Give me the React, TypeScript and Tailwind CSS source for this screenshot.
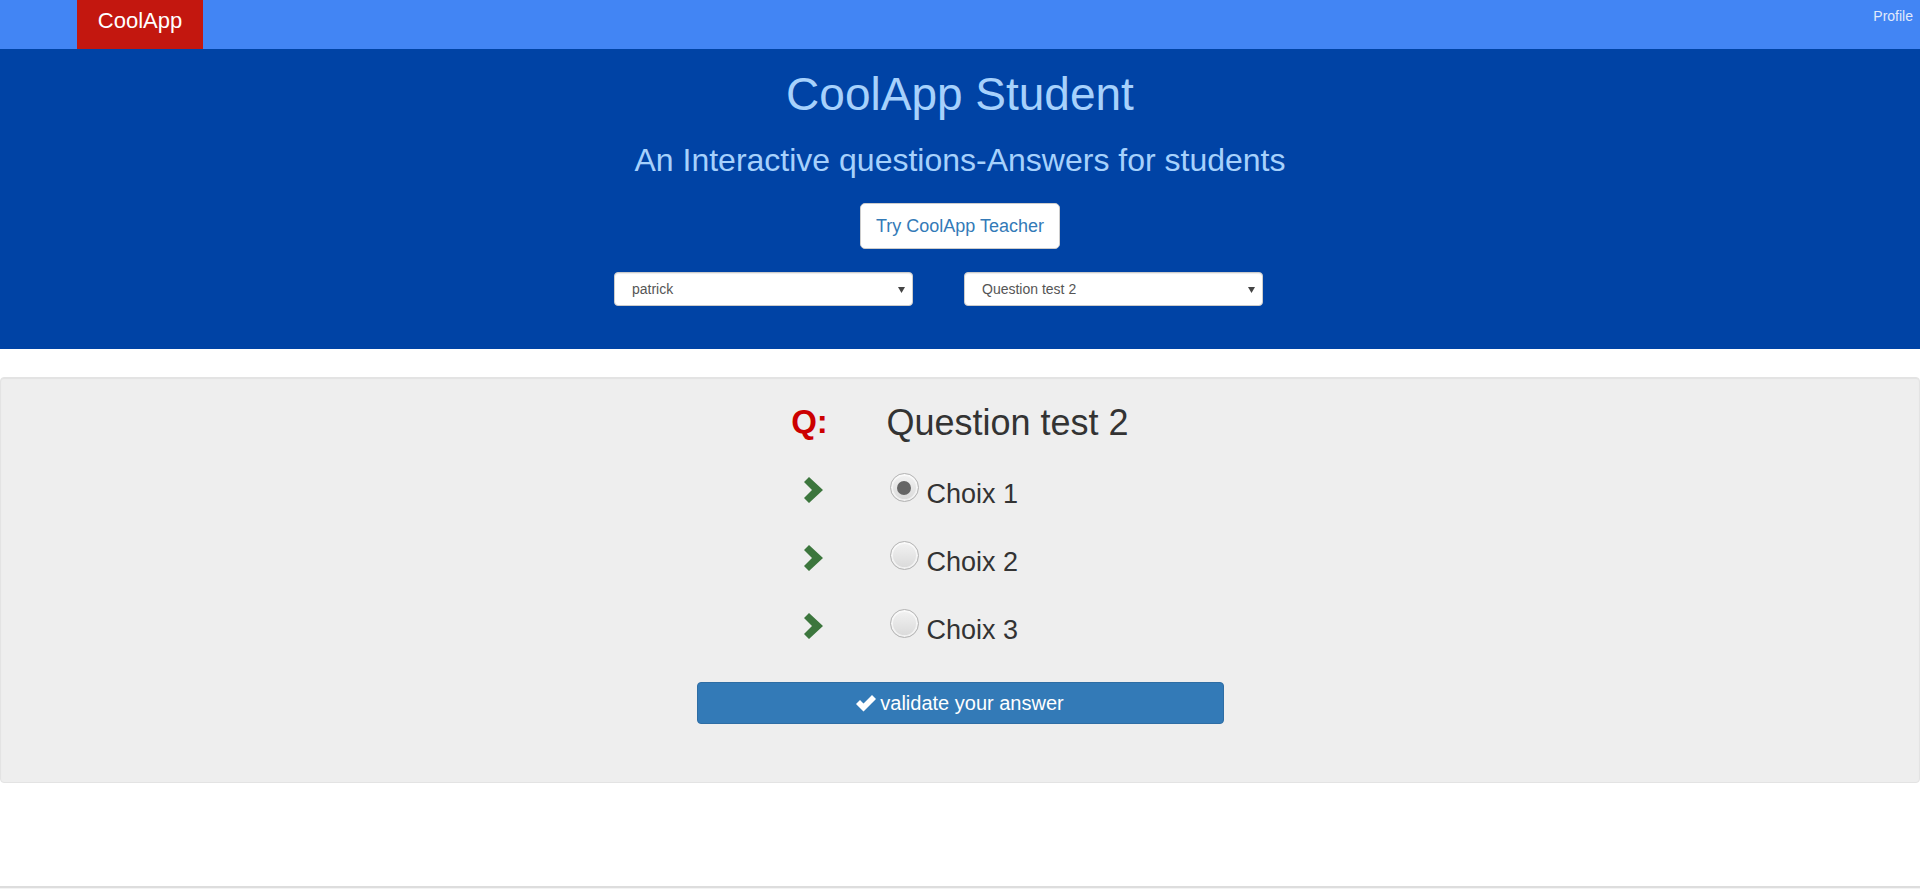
const font = { fontFamily: '"Liberation Sans", Arial, sans-serif' };

function Chevron() {
  return (
    <svg width="19" height="26" viewBox="0 0 19 26" className="block">
      <polygon points="0,5 5,0 19,13 5,26 0,21 8,13" fill="#3c763d" />
    </svg>
  );
}

function Check() {
  return (
    <svg width="20" height="17" viewBox="0 0 20 17" className="block">
      <polygon points="0,9 4,5 7.5,8.5 16,0 20,4 7.5,16.5" fill="#ffffff" />
    </svg>
  );
}

function Select({ value }: { value: string }) {
  return (
    <div className="relative flex h-[34px] w-[299px] items-center rounded-[4px] border border-[#ccc] bg-white pl-[17px] text-[14px] text-[#555] shadow-[inset_0_1px_1px_rgba(0,0,0,0.075)]">
      <span>{value}</span>
      <svg width="7" height="6" viewBox="0 0 7 6" className="absolute right-[7px] top-[14px]">
        <polygon points="0,0 7,0 3.5,6" fill="#444" />
      </svg>
    </div>
  );
}

function Radio({ checked }: { checked?: boolean }) {
  return (
    <span className="flex h-[29px] w-[29px] shrink-0 items-center justify-center rounded-full border border-[#b3b3b3] bg-gradient-to-b from-[#f3f3f3] to-[#d9d9d9] shadow-[inset_0_0_0_2px_rgba(255,255,255,0.6)]">
      {checked && <span className="h-[14px] w-[14px] rounded-full bg-[#666]" />}
    </span>
  );
}

const choices = ["Choix 1", "Choix 2", "Choix 3"];

export default function App() {
  return (
    <div className="min-h-[890px] bg-white" style={font}>
      {/* Navbar */}
      <div className="flex h-[49px] justify-between bg-[#4285f4]">
        <div className="ml-[77px] flex w-[126px] justify-center bg-[#c3170f] pt-[9px] text-[22px] leading-[24px] text-white">
          CoolApp
        </div>
        <div className="pr-[7px] pt-[6px] text-[14px] leading-[20px] text-[#e2eafb]">
          Profile
        </div>
      </div>

      {/* Hero */}
      <div className="flex h-[300px] flex-col items-center bg-[#0043a5] pt-[20px] text-[#a6d1fc]">
        <h1 className="text-[46px] leading-[50px]">CoolApp Student</h1>
        <p className="mt-[23px] text-[32px] leading-[36px]">
          An Interactive questions-Answers for students
        </p>
        <button className="mt-[25px] h-[46px] w-[200px] rounded-[5px] border border-[#ccc] bg-white text-[18px] text-[#337ab7]">
          Try CoolApp Teacher
        </button>
        <div className="mt-[23px] flex gap-[51px] pr-[43px]">
          <Select value="patrick" />
          <Select value="Question test 2" />
        </div>
      </div>

      {/* Question panel */}
      <div className="mt-[28px] rounded-[4px] border border-[#e3e3e3] bg-[#eeeeee] pb-[58px] pt-[25px] shadow-[inset_0_1px_1px_rgba(0,0,0,0.05)]">
        <div className="mx-auto w-[527px] text-[#333]">
          <div className="flex h-[40px] items-baseline">
            <div className="flex w-[190px] -translate-y-[2px] justify-center pl-[36px]">
              <span className="text-[33px] font-bold leading-[40px] text-[#cc0000]">Q:</span>
            </div>
            <span className="text-[36px] leading-[40px]">Question test 2</span>
          </div>
          <div className="mt-[30px]">
            {choices.map((c, i) => (
              <div key={c} className="flex h-[68px] items-start">
                <div className="flex w-[190px] justify-center pl-[44px] pt-[4px]">
                  <Chevron />
                </div>
                <div className="ml-[3px] flex items-start">
                  <Radio checked={i === 0} />
                  <span className="ml-[8px] mt-[1px] text-[27px] leading-[40px]">{c}</span>
                </div>
              </div>
            ))}
          </div>
          <button className="mt-[5px] flex h-[42px] w-[527px] items-center justify-center gap-[4px] rounded-[4px] border border-[#2e6da4] bg-[#337ab7] text-[20px] text-white">
            <Check />
            <span>validate your answer</span>
          </button>
        </div>
      </div>

      {/* Footer line */}
      <div className="mt-[103px] h-[3px] border-t-2 border-[#dddddd] bg-[#f3f3f3]" />
    </div>
  );
}
